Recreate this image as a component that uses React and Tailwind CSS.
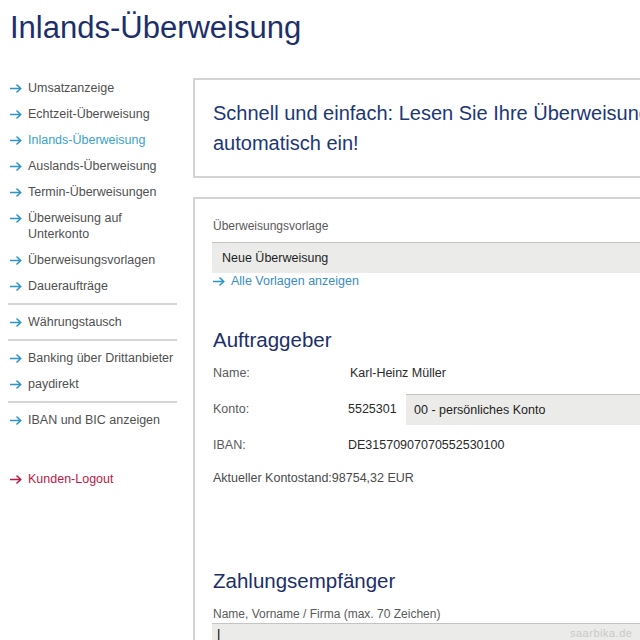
import React from "react";

function Arrow({ color = "#2b95c9" }) {
  return (
    <svg width="12" height="9" viewBox="0 0 12 9" className="shrink-0" aria-hidden="true">
      <path d="M0.5 4.5 H10.5 M7 1 L10.8 4.5 L7 8" fill="none" stroke={color} strokeWidth="1.6" strokeLinecap="round" strokeLinejoin="round" />
    </svg>
  );
}

function NavItem({ children, active, logout }) {
  const color = logout ? "text-[#c2173f]" : active ? "text-[#3aa2cc]" : "text-[#505050]";
  return (
    <li className="flex items-start gap-[6px]">
      <span className="h-[16px] flex items-center">
        <Arrow color={logout ? "#c2173f" : "#2b95c9"} />
      </span>
      <span className={`${color} text-[12.5px] leading-[16px]`}>{children}</span>
    </li>
  );
}

function Sep() {
  return <li className="h-[2px] bg-[#d6d6d6] my-[-1px] w-[169px] -ml-[2px]" />;
}

export default function App() {
  return (
    <div className="w-[640px] h-[640px] overflow-hidden bg-white font-['Liberation_Sans',Arial,sans-serif]">
      <h1 className="pl-[10px] pt-[10px] text-[31px] leading-[36px] text-[#1c2f6b]">Inlands-Überweisung</h1>
      <div className="flex mt-[32px]">
        <aside className="w-[193px] pl-[10px] shrink-0 pt-[2px]">
          <ul className="flex flex-col gap-[10px]">
            <NavItem>Umsatzanzeige</NavItem>
            <NavItem>Echtzeit-Überweisung</NavItem>
            <NavItem active>Inlands-Überweisung</NavItem>
            <NavItem>Auslands-Überweisung</NavItem>
            <NavItem>Termin-Überweisungen</NavItem>
            <NavItem>
              Überweisung auf
              <br />
              Unterkonto
            </NavItem>
            <NavItem>Überweisungsvorlagen</NavItem>
            <NavItem>Daueraufträge</NavItem>
            <Sep />
            <NavItem>Währungstausch</NavItem>
            <Sep />
            <NavItem>Banking über Drittanbieter</NavItem>
            <NavItem>paydirekt</NavItem>
            <Sep />
            <NavItem>IBAN und BIC anzeigen</NavItem>
            <li className="h-[23px]" />
            <NavItem logout>Kunden-Logout</NavItem>
          </ul>
        </aside>
        <main className="w-[520px] shrink-0 flex flex-col">
          <div className="border-2 border-[#d4d4d4] pl-[18px] pt-[18px] pb-[18px] h-[100px]">
            <p className="text-[20px] leading-[30px] text-[#1c3777] whitespace-nowrap">
              Schnell und einfach: Lesen Sie Ihre Überweisungsdaten
              <br />
              automatisch ein!
            </p>
          </div>
          <div className="mt-[19px] border-2 border-[#d4d4d4] pl-[18px] pt-[19px] h-[520px]">
            <div className="text-[12px] leading-[16px] text-[#5a5a5a]">Überweisungsvorlage</div>
            <div className="mt-[8px] -ml-[1px] h-[31px] bg-[#ebebe9] border-t border-[#c4c4c4] flex items-center pl-[10px] text-[12.5px] text-[#1e1e1e]">
              Neue Überweisung
            </div>
            <div className="flex items-center gap-[6px] h-[16px]">
              <Arrow />
              <span className="text-[12.5px] text-[#3a8cc4]">Alle Vorlagen anzeigen</span>
            </div>
            <h2 className="mt-[38px] text-[20.5px] leading-[26px] text-[#1c2f6b]">Auftraggeber</h2>
            <div className="mt-[12px] flex h-[16px] items-center text-[12.5px]">
              <span className="w-[137px] text-[#5a5a5a]">Name:</span>
              <span className="text-[#2a2a2a]">Karl-Heinz Müller</span>
            </div>
            <div className="mt-[13px] flex h-[31px] items-center text-[12.5px]">
              <span className="w-[135px] text-[#5a5a5a]">Konto:</span>
              <span className="w-[58px] text-[#2a2a2a]">5525301</span>
              <div className="flex-1 h-[31px] bg-[#ebebe9] border-t border-[#c4c4c4] flex items-center pl-[8px] text-[#1e1e1e]">
                00 - persönliches Konto
              </div>
            </div>
            <div className="mt-[12px] flex h-[16px] items-center text-[12.5px]">
              <span className="w-[135px] text-[#5a5a5a]">IBAN:</span>
              <span className="text-[#2a2a2a]">DE31570907070552530100</span>
            </div>
            <div className="mt-[17px] h-[16px] flex items-center text-[12.5px] text-[#4a4a4a]">
              Aktueller Kontostand:98754,32 EUR
            </div>
            <h2 className="mt-[82px] text-[20.5px] leading-[26px] text-[#1c2f6b]">Zahlungsempfänger</h2>
            <div className="mt-[12px] text-[12px] leading-[16px] text-[#5a5a5a]">Name, Vorname / Firma (max. 70 Zeichen)</div>
            <div className="mt-[1px] -ml-[1px] h-[31px] bg-[#ebebe9] border-t border-[#c4c4c4] flex items-start pl-[5px] pt-[3px] relative">
              <span className="text-[13px] leading-[14px] text-black">|</span>
              <span className="absolute left-[358px] top-[1px] text-[11px] tracking-[0.5px] text-[#c9c9c9]">saarbika.de</span>
            </div>
          </div>
        </main>
      </div>
    </div>
  );
}
